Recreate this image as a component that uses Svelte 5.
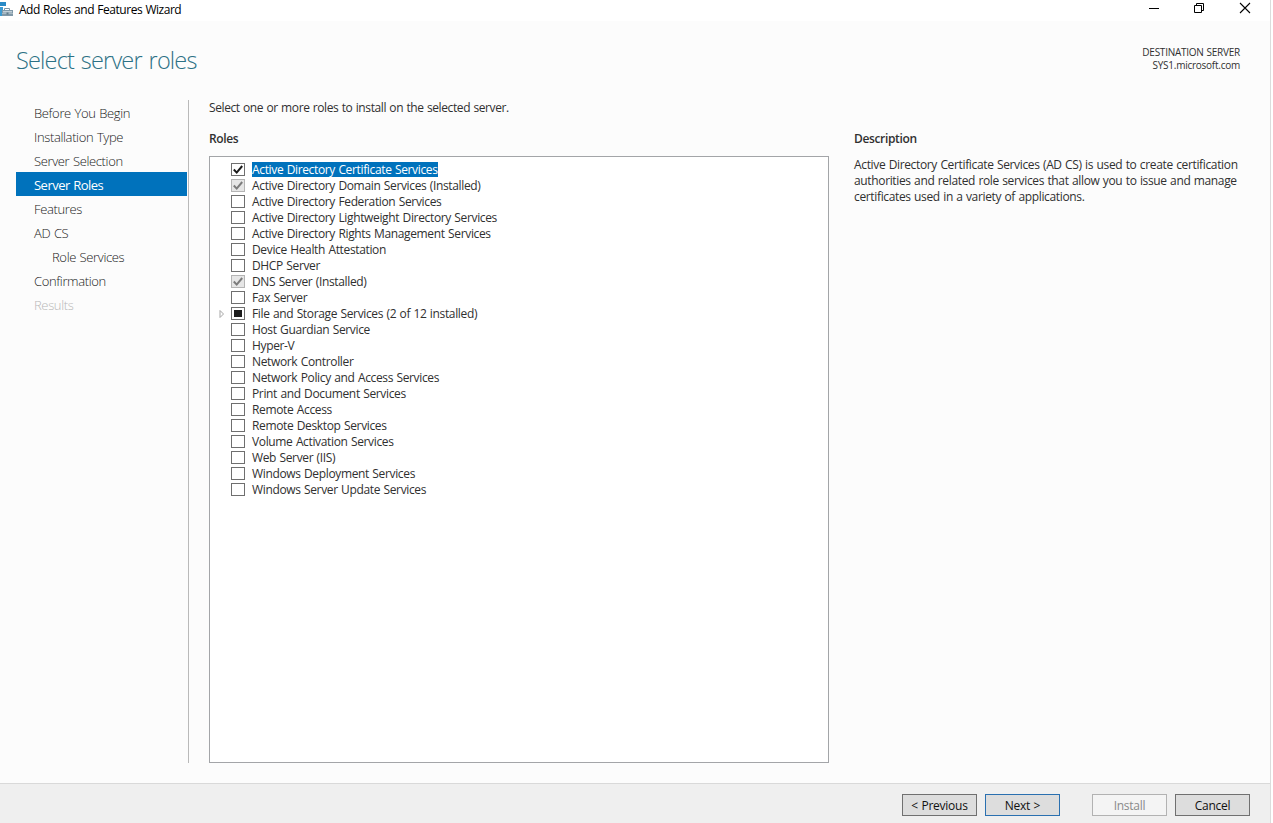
<script lang="ts">
  type CheckState = "empty" | "checked" | "installed" | "partial";

  interface Role {
    name: string;
    state?: CheckState;
    expandable?: boolean;
  }

  interface Step {
    label: string;
    nested?: boolean;
    disabled?: boolean;
  }

  const steps: Step[] = [
    { label: "Before You Begin" },
    { label: "Installation Type" },
    { label: "Server Selection" },
    { label: "Server Roles" },
    { label: "Features" },
    { label: "AD CS" },
    { label: "Role Services", nested: true },
    { label: "Confirmation" },
    { label: "Results", disabled: true },
  ];

  const roles: Role[] = [
    { name: "Active Directory Certificate Services", state: "checked" },
    { name: "Active Directory Domain Services (Installed)", state: "installed" },
    { name: "Active Directory Federation Services" },
    { name: "Active Directory Lightweight Directory Services" },
    { name: "Active Directory Rights Management Services" },
    { name: "Device Health Attestation" },
    { name: "DHCP Server" },
    { name: "DNS Server (Installed)", state: "installed" },
    { name: "Fax Server" },
    { name: "File and Storage Services (2 of 12 installed)", state: "partial", expandable: true },
    { name: "Host Guardian Service" },
    { name: "Hyper-V" },
    { name: "Network Controller" },
    { name: "Network Policy and Access Services" },
    { name: "Print and Document Services" },
    { name: "Remote Access" },
    { name: "Remote Desktop Services" },
    { name: "Volume Activation Services" },
    { name: "Web Server (IIS)" },
    { name: "Windows Deployment Services" },
    { name: "Windows Server Update Services" },
  ];

  let currentStep = $state("Server Roles");
  let selectedRole = $state("Active Directory Certificate Services");
</script>

<div class="wizard">
  <header class="titlebar">
    <svg class="app-icon" width="14" height="16" viewBox="0 0 14 16" aria-hidden="true">
      <path d="M0 1h6v4H0z" fill="#2a8ac6" />
      <path d="M0 6h3v9H0z" fill="#3c9bd2" />
      <path d="M4.5 9V7.5h5V9" fill="none" stroke="#7d97a6" />
      <path d="M2 9h11v6H2z" fill="#8098a8" />
      <path d="M3 10h9v1.5H3z" fill="#c3d0d8" />
      <path d="M2 12.5h11" stroke="#a9bac4" />
      <path d="M6.5 11.5h2v2h-2z" fill="#5f7a8a" />
    </svg>
    <span class="caption">Add Roles and Features Wizard</span>
    <div class="window-buttons">
      <svg width="12" height="12" viewBox="0 0 12 12"><path d="M1 6.5h10" stroke="#000" /></svg>
      <svg width="12" height="12" viewBox="0 0 12 12">
        <path d="M1.5 3.5h7v7h-7zM3.5 3V1.5h7v7H9" fill="none" stroke="#000" />
      </svg>
      <svg width="12" height="12" viewBox="0 0 12 12">
        <path d="M1 1l10 10M11 1L1 11" stroke="#000" stroke-width="1.1" />
      </svg>
    </div>
  </header>

  <section class="heading">
    <h1>Select server roles</h1>
    <p class="destination">
      <span class="dest-label">DESTINATION SERVER</span>
      <span class="dest-name">SYS1.microsoft.com</span>
    </p>
  </section>

  <main>
    <nav>
      {#each steps as step}
        <button
          class="step"
          class:nested={step.nested}
          class:active={step.label === currentStep}
          disabled={step.disabled}
          onclick={() => (currentStep = step.label)}>{step.label}</button>
      {/each}
    </nav>

    <section class="roles">
      <p class="intro">Select one or more roles to install on the selected server.</p>
      <h2>Roles</h2>
      <ul>
        {#each roles as role}
          <li>
            <span class="expander">
              {#if role.expandable}
                <svg width="6" height="10" viewBox="0 0 6 10">
                  <path d="M1 1.5v7L4.5 5z" fill="#fff" stroke="#a6a6a6" />
                </svg>
              {/if}
            </span>
            <span class="box {role.state ?? 'empty'}">
              {#if role.state === "checked" || role.state === "installed"}
                <svg width="12" height="11" viewBox="0 0 12 11">
                  <path d="M1.8 5.5l2.9 3.1L10.2 2" fill="none" stroke="currentColor" stroke-width="2" />
                </svg>
              {/if}
            </span>
            <button
              class="role-name"
              class:selected={role.name === selectedRole}
              onclick={() => (selectedRole = role.name)}>{role.name}</button>
          </li>
        {/each}
      </ul>
    </section>

    <aside>
      <h2>Description</h2>
      <p>
        Active Directory Certificate Services (AD CS) is used to create certification<br />
        authorities and related role services that allow you to issue and manage<br />
        certificates used in a variety of applications.
      </p>
    </aside>
  </main>

  <footer>
    <button class="action">&lt; Previous</button>
    <button class="action default">Next &gt;</button>
    <button class="action install" disabled>Install</button>
    <button class="action">Cancel</button>
  </footer>
</div>

<style>
  :global(body) {
    margin: 0;
    background: #fff;
  }

  .wizard {
    box-sizing: border-box;
    width: 1271px;
    height: 823px;
    display: flex;
    flex-direction: column;
    overflow: hidden;
    border-right: 1px solid #dcdcdc;
    background: #fcfcfc;
    color: #303030;
    font: 12px/16px "Open Sans", "Noto Sans", sans-serif;
    letter-spacing: -0.35px;
    word-spacing: 0.6px;
  }

  h1,
  h2,
  p,
  ul {
    margin: 0;
    padding: 0;
  }

  button {
    padding: 0;
    border: 0;
    background: none;
    color: inherit;
    font: inherit;
    letter-spacing: inherit;
    word-spacing: inherit;
    white-space: nowrap;
  }

  .titlebar {
    flex: none;
    display: flex;
    height: 21px;
    background: #fff;
    color: #000;
  }

  .app-icon {
    flex: none;
    margin-top: 1px;
  }

  .caption {
    padding: 2px 0 0 5px;
    letter-spacing: -0.47px;
  }

  .window-buttons {
    display: flex;
    gap: 34px;
    margin: 2px 19px 0 auto;
  }

  .window-buttons svg:first-child {
    padding-left: 1px;
    margin-right: -1px;
  }

  .heading {
    flex: none;
    display: flex;
    justify-content: space-between;
    height: 79px;
    padding: 0 30px 0 16px;
    box-sizing: border-box;
  }

  h1 {
    padding-top: 22px;
    color: #2c7185;
    font-size: 23.5px;
    font-weight: 300;
    line-height: 34px;
    letter-spacing: -0.82px;
    word-spacing: 1.5px;
  }

  .destination {
    display: flex;
    flex-direction: column;
    align-items: flex-end;
    padding-top: 25px;
    font-size: 10px;
    line-height: 13px;
    letter-spacing: -0.25px;
  }

  main {
    flex: 1;
    min-height: 0;
    display: flex;
    padding: 0 30px 20px 16px;
  }

  nav {
    flex: none;
    display: flex;
    flex-direction: column;
    width: 172px;
    border-right: 1px solid #b9b9b9;
  }

  .step {
    width: 171px;
    height: 24px;
    padding: 2px 0 0 18px;
    color: #1a1a1a;
    font-size: 13px;
    font-weight: 300;
    letter-spacing: -0.36px;
    text-align: left;
  }

  .nested {
    padding-left: 36px;
  }

  .active {
    background: #0072bc;
    color: #fff;
    font-weight: 400;
    letter-spacing: -0.52px;
  }

  .step:disabled {
    color: #b8b8b8;
  }

  .roles {
    flex: none;
    display: flex;
    flex-direction: column;
    width: 620px;
    margin-left: 20px;
  }

  .intro {
    height: 31px;
    letter-spacing: -0.4px;
  }

  h2 {
    font-size: 12px;
    font-weight: 600;
    line-height: 16px;
  }

  ul {
    flex: 1;
    margin-top: 9px;
    padding: 4px 0 0 7px;
    border: 1px solid #a3a5a8;
    background: #fff;
    list-style: none;
  }

  li {
    display: flex;
    align-items: center;
    height: 16px;
  }

  .expander {
    display: flex;
    width: 14px;
    padding-left: 2px;
    box-sizing: border-box;
  }

  .expander svg {
    margin-top: 1px;
  }

  .box {
    box-sizing: border-box;
    width: 14px;
    height: 13px;
    margin-top: 1px;
    border: 1px solid #6f6f6f;
    background: #fff;
    color: #1b1b1b;
  }

  .box svg {
    display: block;
  }

  .installed {
    border-color: #b4b4b4;
    background: #e6e6e6;
    color: #7c7c7c;
  }

  .partial {
    padding: 2px;
    background: linear-gradient(#1c1c1c, #1c1c1c) content-box no-repeat #fff;
  }

  .role-name {
    height: 15px;
    margin-left: 7px;
    line-height: 15px;
  }

  .selected {
    background: #0072bc;
    color: #fff;
  }

  aside {
    margin: 31px 0 0 25px;
    white-space: nowrap;
  }

  aside p {
    margin-top: 10px;
  }

  footer {
    flex: none;
    display: flex;
    justify-content: flex-end;
    gap: 8px;
    box-sizing: border-box;
    height: 40px;
    padding: 10px 20px 0 0;
    border-top: 1px solid #d9d9d9;
    background: #efefef;
  }

  .action {
    box-sizing: border-box;
    width: 75px;
    height: 22px;
    padding-top: 2px;
    border: 1px solid #707070;
    background: #dddddd;
    color: #111;
    letter-spacing: -0.25px;
  }

  .default {
    border-color: #2a70b0;
  }

  .install {
    margin-left: 24px;
  }

  .action:disabled {
    border-color: #b2b2b2;
    background: #f4f4f4;
    color: #8a8a8a;
  }
</style>
